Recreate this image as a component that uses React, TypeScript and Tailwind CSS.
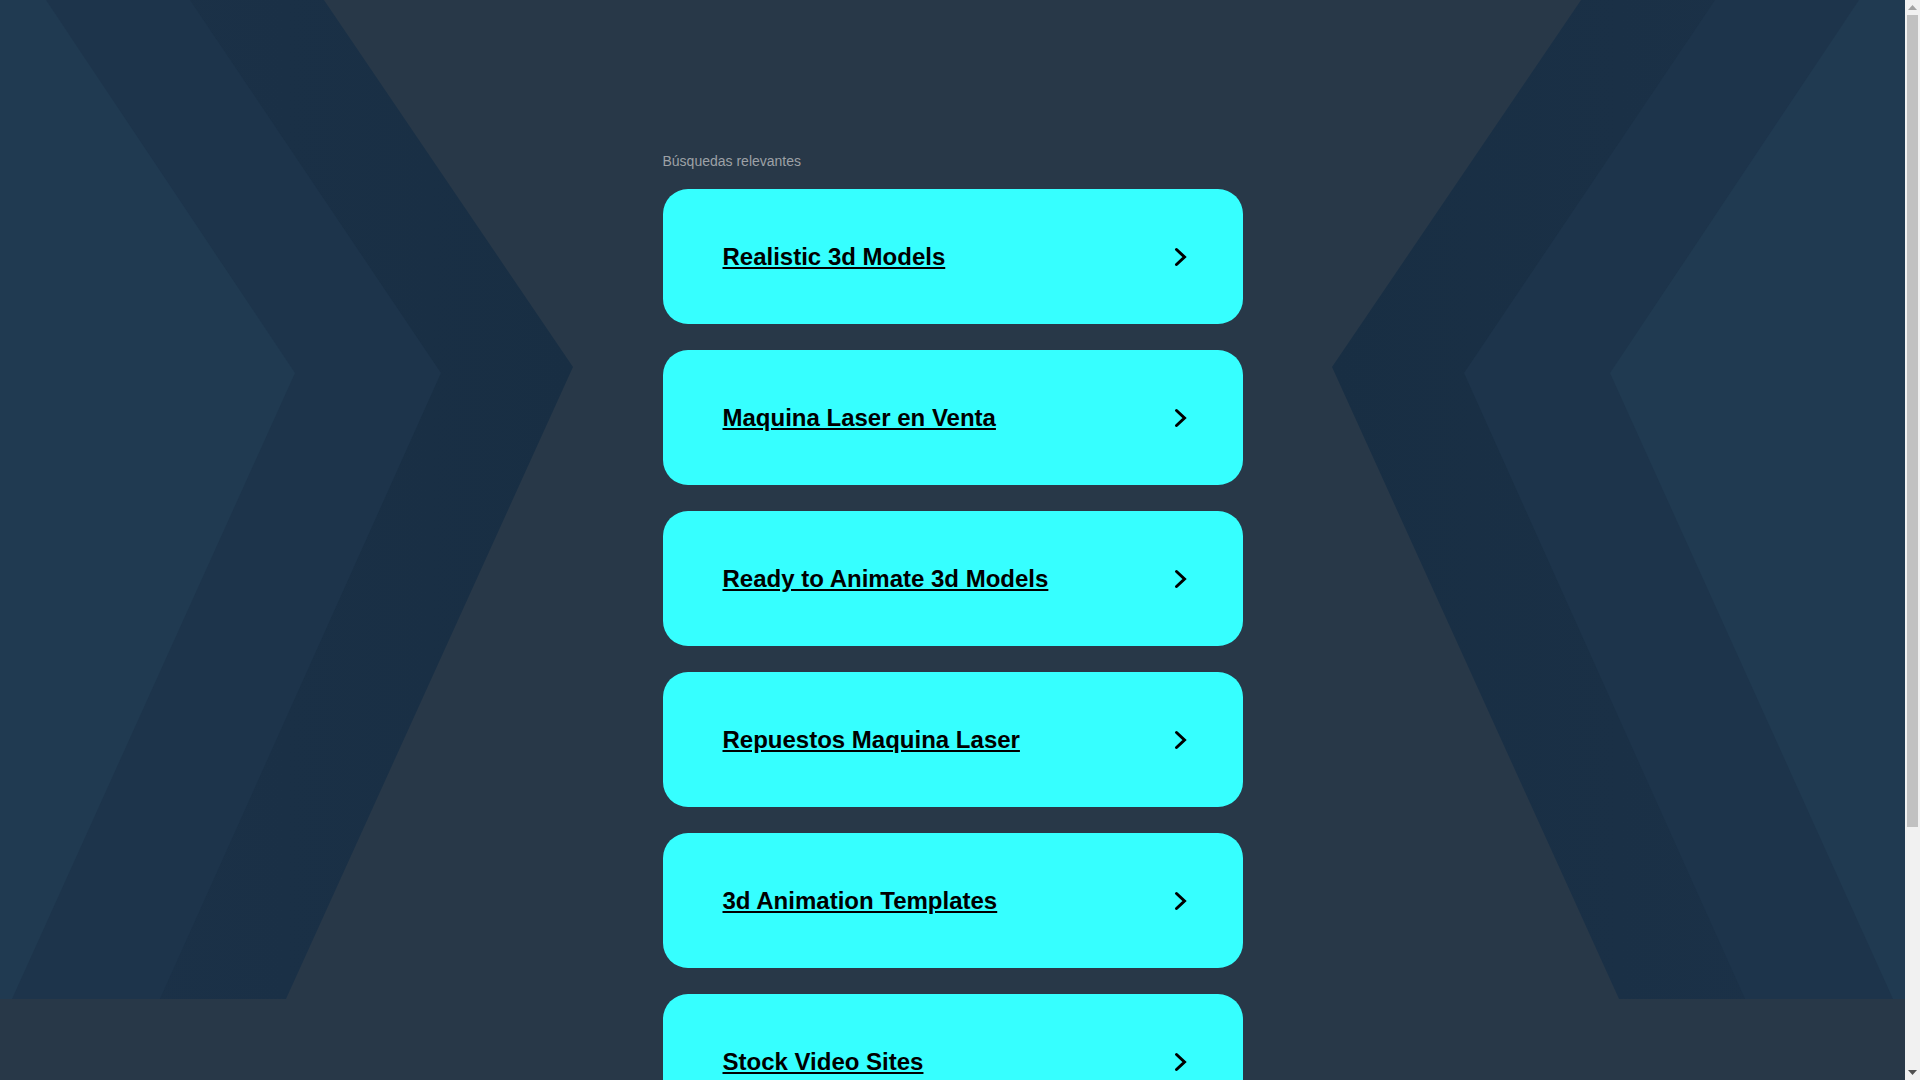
import React from "react"

const searches = [
  "Realistic 3d Models",
  "Maquina Laser en Venta",
  "Ready to Animate 3d Models",
  "Repuestos Maquina Laser",
  "3d Animation Templates",
  "Stock Video Sites",
]

function Backdrop() {
  // layered chevrons, mirrored around the page centre
  const W = 1905
  const m = (pts: number[][]) => pts.map(([x, y]) => `${W - x},${y}`).join(" ")
  const l = (pts: number[][]) => pts.map(([x, y]) => `${x},${y}`).join(" ")
  const outer = [[0, 0], [324, 0], [573, 367], [286, 999], [0, 999]]
  const middle = [[0, 0], [190, 0], [441, 373], [160, 999], [0, 999]]
  const inner = [[0, 0], [46, 0], [295, 373], [12, 999], [0, 999]]
  return (
    <svg
      className="absolute left-0 top-0 w-full h-[999px]"
      viewBox="0 0 1905 999"
      preserveAspectRatio="none"
    >
      <defs>
        <linearGradient id="g1" x1="0" y1="0" x2="1" y2="0">
          <stop offset="0" stopColor="#1c3249" />
          <stop offset="1" stopColor="#182e43" />
        </linearGradient>
        <linearGradient id="g1r" x1="1" y1="0" x2="0" y2="0">
          <stop offset="0" stopColor="#1c3249" />
          <stop offset="1" stopColor="#182e43" />
        </linearGradient>
      </defs>
      <polygon points={l(outer)} fill="url(#g1)" />
      <polygon points={l(middle)} fill="#1d344b" />
      <polygon points={l(inner)} fill="#203a51" />
      <polygon points={m(outer)} fill="url(#g1r)" />
      <polygon points={m(middle)} fill="#1d344b" />
      <polygon points={m(inner)} fill="#203a51" />
    </svg>
  )
}

function Chevron() {
  return (
    <svg width="14" height="20" viewBox="0 0 14 20" className="shrink-0">
      <polyline
        points="2.5,2.5 10.5,10 2.5,17.5"
        fill="none"
        stroke="#000"
        strokeWidth="3"
        strokeLinecap="round"
        strokeLinejoin="miter"
      />
    </svg>
  )
}

// classic browser scrollbar, as in the screenshot
function ScrollBar() {
  return (
    <div className="w-[15px] shrink-0 h-screen bg-[#f1f1f1] flex flex-col items-center">
      <div className="h-[15px] flex items-center justify-center">
        <svg width="9" height="5" viewBox="0 0 9 5">
          <polygon points="0,5 4.5,0 9,5" fill="#a3a3a3" />
        </svg>
      </div>
      <div className="w-[11px] h-[812px] bg-[#c1c1c1]" />
      <div className="flex-1" />
      <div className="h-[15px] flex items-center justify-center">
        <svg width="9" height="5" viewBox="0 0 9 5">
          <polygon points="0,0 9,0 4.5,5" fill="#505050" />
        </svg>
      </div>
    </div>
  )
}

export default function App() {
  return (
    <div
      className="flex h-screen overflow-hidden bg-[#283848]"
      style={{ fontFamily: '"Liberation Sans", Arial, sans-serif' }}
    >
      <div className="relative flex-1 min-h-[1390px]">
        <Backdrop />

        <div className="relative mx-auto w-[580px] pt-[153px] pb-[200px]">
          <p className="text-[14px] leading-[16px] text-[#9da1a6] mb-[20px]">
            Búsquedas relevantes
          </p>

          <div className="flex flex-col gap-[26px]">
            {searches.map((s) => (
              <a
                key={s}
                href="#"
                className="flex items-center justify-between h-[135px] rounded-[25px] bg-[#36ffff] pl-[60px] pr-[55px]"
              >
                <span className="text-[24px] leading-[28px] font-bold text-black underline">
                  {s}
                </span>
                <Chevron />
              </a>
            ))}
          </div>
        </div>
      </div>
      <ScrollBar />
    </div>
  )
}
